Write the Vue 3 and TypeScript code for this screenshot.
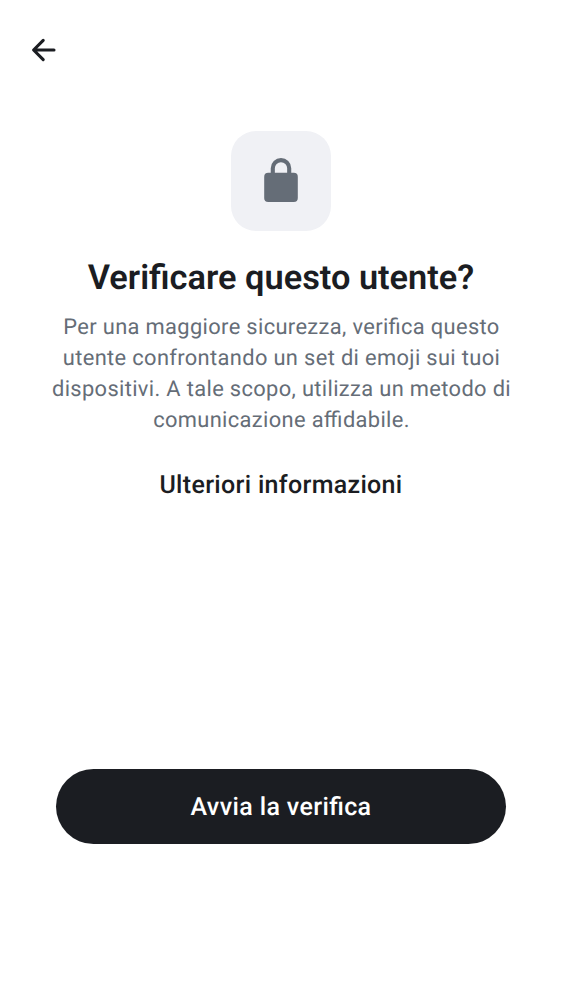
<script setup lang="ts">
const description: string[] = [
  'Per una maggiore sicurezza, verifica questo',
  'utente confrontando un set di emoji sui tuoi',
  'dispositivi. A tale scopo, utilizza un metodo di',
  'comunicazione affidabile.',
]
</script>

<template>
  <main class="screen">
    <header class="bar">
      <button class="back" aria-label="Indietro">
        <svg width="50" height="50" viewBox="0 0 50 50">
          <path d="M34 25H14.5M23.2 15.4L13.6 25L23.2 34.6" fill="none" stroke="#1b1d22" stroke-width="3.1" stroke-linecap="round" stroke-linejoin="round" />
        </svg>
      </button>
    </header>
    <section class="content">
      <div class="tile">
        <svg width="100" height="100" viewBox="0 0 100 100">
          <rect x="33.2" y="41.7" width="33.6" height="29.3" rx="4" fill="#656d77" />
          <path d="M41.8 43V37.3a8.2 8.2 0 0 1 16.4 0V43" fill="none" stroke="#656d77" stroke-width="4.1" />
        </svg>
      </div>
      <h1>Verificare questo utente?</h1>
      <p><span v-for="line in description" :key="line">{{ line }}</span></p>
      <a class="more">Ulteriori informazioni</a>
    </section>
    <footer><button class="primary">Avvia la verifica</button></footer>
  </main>
</template>

<style>
body { background: #fff; }
</style>
<style scoped>
.screen { height: 1000px; box-sizing: border-box; display: flex; flex-direction: column; background: #fff; font-family: Roboto, sans-serif; font-feature-settings: "liga" 1; text-rendering: geometricPrecision; color: #1b1d22; overflow: hidden; }
button { border: 0; padding: 0; font: inherit; font-feature-settings: "liga" 1; text-rendering: geometricPrecision; }
.bar { height: 100px; box-sizing: border-box; padding: 25px 0 0 20px; }
.back { display: block; width: 50px; height: 50px; background: none; color: inherit; }
svg { display: block; }
.content { display: flex; flex-direction: column; align-items: center; padding-top: 31px; }
.tile { width: 100px; height: 100px; border-radius: 25px; background: #f0f1f5; }
h1 { margin: 27px 0 0; font-size: 34.375px; line-height: 40px; font-weight: 600; white-space: nowrap; }
p { margin: 14px 0 0; padding-left: 1px; font-size: 21.875px; line-height: 31px; letter-spacing: 0.35px; color: #656d77; text-align: center; }
p span { display: block; white-space: nowrap; }
.more { margin-top: 34px; font-size: 25px; line-height: 32px; font-weight: 500; letter-spacing: 0.32px; }
footer { margin-top: auto; padding: 0 56px 156px; }
.primary { display: block; width: 450px; height: 75px; padding-top: 1px; border-radius: 38px; background: #1b1d22; color: #fff; font-size: 25px; font-weight: 500; letter-spacing: 0.38px; }
</style>
